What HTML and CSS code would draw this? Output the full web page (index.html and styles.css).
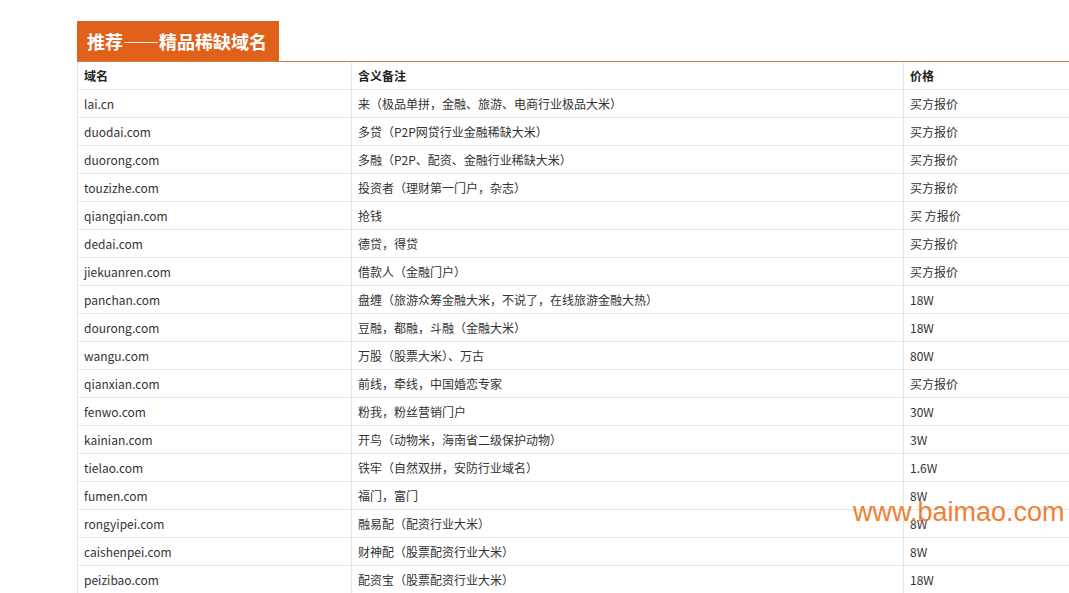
FILE: index.html
```html
<!DOCTYPE html>
<html lang="zh">
<head>
<meta charset="utf-8">
<link rel="stylesheet" href="styles.css">
</head>
<body>
<div class="page">
  <div class="section">
    <div class="title-bar"><h2 class="title">推荐——精品稀缺域名</h2></div>
    <table class="domains">
      <colgroup><col class="c1"><col class="c2"><col class="c3"></colgroup>
      <thead>
        <tr><th>域名</th><th>含义备注</th><th>价格</th></tr>
      </thead>
      <tbody>
        <tr><td>lai.cn</td><td>来（极品单拼，金融、旅游、电商行业极品大米）</td><td>买方报价</td></tr>
        <tr><td>duodai.com</td><td>多贷（P2P网贷行业金融稀缺大米）</td><td>买方报价</td></tr>
        <tr><td>duorong.com</td><td>多融（P2P、配资、金融行业稀缺大米）</td><td>买方报价</td></tr>
        <tr><td>touzizhe.com</td><td>投资者（理财第一门户，杂志）</td><td>买方报价</td></tr>
        <tr><td>qiangqian.com</td><td>抢钱</td><td>买 方报价</td></tr>
        <tr><td>dedai.com</td><td>德贷，得贷</td><td>买方报价</td></tr>
        <tr><td>jiekuanren.com</td><td>借款人（金融门户）</td><td>买方报价</td></tr>
        <tr><td>panchan.com</td><td>盘缠（旅游众筹金融大米，不说了，在线旅游金融大热）</td><td>18W</td></tr>
        <tr><td>dourong.com</td><td>豆融，都融，斗融（金融大米）</td><td>18W</td></tr>
        <tr><td>wangu.com</td><td>万股（股票大米）、万古</td><td>80W</td></tr>
        <tr><td>qianxian.com</td><td>前线，牵线，中国婚恋专家</td><td>买方报价</td></tr>
        <tr><td>fenwo.com</td><td>粉我，粉丝营销门户</td><td>30W</td></tr>
        <tr><td>kainian.com</td><td>开鸟（动物米，海南省二级保护动物）</td><td>3W</td></tr>
        <tr><td>tielao.com</td><td>铁牢（自然双拼，安防行业域名）</td><td>1.6W</td></tr>
        <tr><td>fumen.com</td><td>福门，富门</td><td>8W</td></tr>
        <tr><td>rongyipei.com</td><td>融易配（配资行业大米）</td><td>8W</td></tr>
        <tr><td>caishenpei.com</td><td>财神配（股票配资行业大米）</td><td>8W</td></tr>
        <tr><td>peizibao.com</td><td>配资宝（股票配资行业大米）</td><td>18W</td></tr>
      </tbody>
    </table>
  </div>
  <div class="watermark">www.baimao.com</div>
</div>
</body>
</html>
```

FILE: styles.css
```css
html, body {
  margin: 0;
  padding: 0;
  height: 593px;
  overflow: hidden;
  background: #ffffff;
}

.page {
  position: relative;
  height: 593px;
  overflow: hidden;
  font-family: "Noto Sans CJK SC", "Noto Sans", sans-serif;
  color: #333333;
}

.section {
  padding: 21px 0 0 77px;
}

.title-bar {
  display: flex;
  border-bottom: 1px solid #d2813f;
  width: 1100px;
}

.title {
  margin: 0;
  height: 40px;
  width: 202px;
  box-sizing: border-box;
  padding-left: 10px;
  background: #e2611a;
  color: #ffffff;
  font-size: 18px;
  font-weight: bold;
  line-height: 40px;
  white-space: nowrap;
  letter-spacing: 0;
}

.domains {
  border-collapse: collapse;
  table-layout: fixed;
  width: 1100px;
  font-size: 12px;
}

.domains col.c1 { width: 274px; }
.domains col.c2 { width: 552px; }
.domains col.c3 { width: 274px; }

.domains th,
.domains td {
  height: 27px;
  padding: 0 0 0 6px;
  border: 1px solid #e6e6e6;
  border-top: none;
  text-align: left;
  line-height: 27px;
  white-space: nowrap;
  color: #333333;
}

.domains th {
  font-weight: bold;
  color: #222222;
}

.watermark {
  position: absolute;
  left: 853px;
  top: 497px;
  font-family: "Liberation Sans", Arial, sans-serif;
  font-size: 27px;
  color: #f0721c;
  opacity: 0.9;
  white-space: nowrap;
}
```
